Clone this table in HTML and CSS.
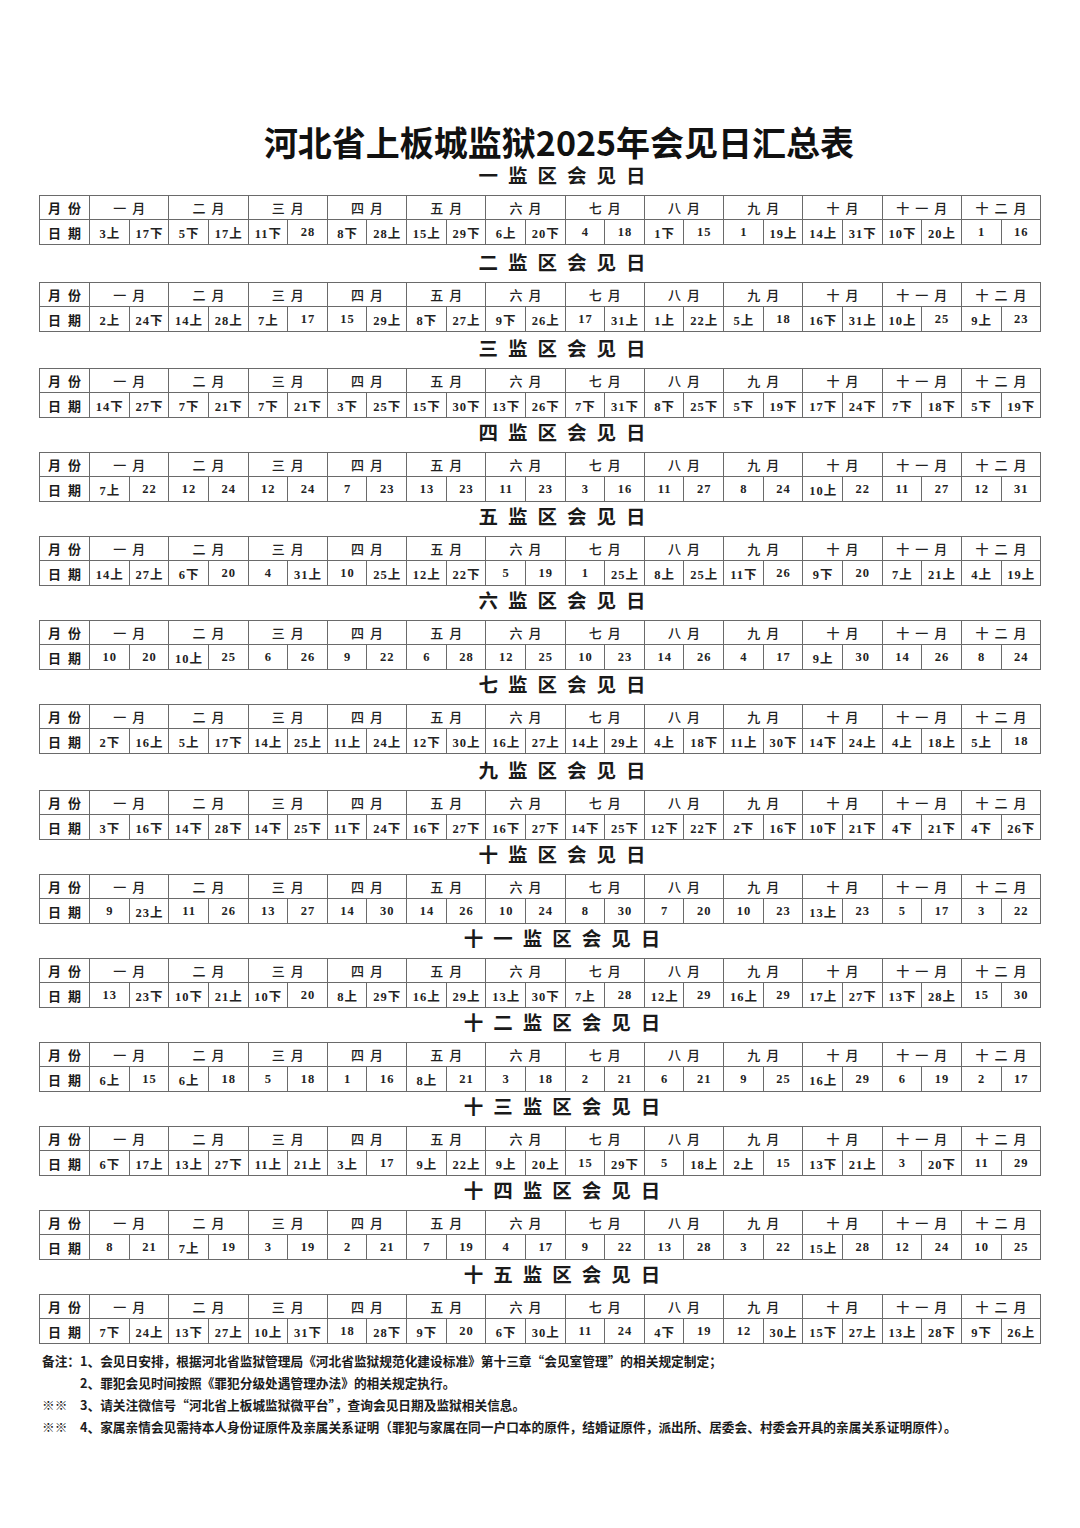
FILE: index.html
```html
<!DOCTYPE html>
<html lang="zh-CN">
<head>
<meta charset="utf-8">
<title>河北省上板城监狱2025年会见日汇总表</title>
<link rel="stylesheet" href="styles.css">
</head>
<body>
<div class="page">
  <h1 class="title">河北省上板城监狱2025年会见日汇总表</h1>

  <section class="sec sec--first">
    <h2 class="sec-title">一监区会见日</h2>
    <table class="grid">
      <colgroup><col class="c-lbl"><col span="24" class="c-day"></colgroup>
      <tr><th class="lbl">月份</th><th colspan="2" class="mon">一月</th><th colspan="2" class="mon">二月</th><th colspan="2" class="mon">三月</th><th colspan="2" class="mon">四月</th><th colspan="2" class="mon">五月</th><th colspan="2" class="mon">六月</th><th colspan="2" class="mon">七月</th><th colspan="2" class="mon">八月</th><th colspan="2" class="mon">九月</th><th colspan="2" class="mon">十月</th><th colspan="2" class="mon">十一月</th><th colspan="2" class="mon">十二月</th></tr>
      <tr><th class="lbl">日期</th><td>3上</td><td>17下</td><td>5下</td><td>17上</td><td>11下</td><td>28</td><td>8下</td><td>28上</td><td>15上</td><td>29下</td><td>6上</td><td>20下</td><td>4</td><td>18</td><td>1下</td><td>15</td><td>1</td><td>19上</td><td>14上</td><td>31下</td><td>10下</td><td>20上</td><td>1</td><td>16</td></tr>
    </table>
  </section>

  <section class="sec sec--gap3">
    <h2 class="sec-title">二监区会见日</h2>
    <table class="grid">
      <colgroup><col class="c-lbl"><col span="24" class="c-day"></colgroup>
      <tr><th class="lbl">月份</th><th colspan="2" class="mon">一月</th><th colspan="2" class="mon">二月</th><th colspan="2" class="mon">三月</th><th colspan="2" class="mon">四月</th><th colspan="2" class="mon">五月</th><th colspan="2" class="mon">六月</th><th colspan="2" class="mon">七月</th><th colspan="2" class="mon">八月</th><th colspan="2" class="mon">九月</th><th colspan="2" class="mon">十月</th><th colspan="2" class="mon">十一月</th><th colspan="2" class="mon">十二月</th></tr>
      <tr><th class="lbl">日期</th><td>2上</td><td>24下</td><td>14上</td><td>28上</td><td>7上</td><td>17</td><td>15</td><td>29上</td><td>8下</td><td>27上</td><td>9下</td><td>26上</td><td>17</td><td>31上</td><td>1上</td><td>22上</td><td>5上</td><td>18</td><td>16下</td><td>31上</td><td>10上</td><td>25</td><td>9上</td><td>23</td></tr>
    </table>
  </section>

  <section class="sec sec--gap2">
    <h2 class="sec-title">三监区会见日</h2>
    <table class="grid">
      <colgroup><col class="c-lbl"><col span="24" class="c-day"></colgroup>
      <tr><th class="lbl">月份</th><th colspan="2" class="mon">一月</th><th colspan="2" class="mon">二月</th><th colspan="2" class="mon">三月</th><th colspan="2" class="mon">四月</th><th colspan="2" class="mon">五月</th><th colspan="2" class="mon">六月</th><th colspan="2" class="mon">七月</th><th colspan="2" class="mon">八月</th><th colspan="2" class="mon">九月</th><th colspan="2" class="mon">十月</th><th colspan="2" class="mon">十一月</th><th colspan="2" class="mon">十二月</th></tr>
      <tr><th class="lbl">日期</th><td>14下</td><td>27下</td><td>7下</td><td>21下</td><td>7下</td><td>21下</td><td>3下</td><td>25下</td><td>15下</td><td>30下</td><td>13下</td><td>26下</td><td>7下</td><td>31下</td><td>8下</td><td>25下</td><td>5下</td><td>19下</td><td>17下</td><td>24下</td><td>7下</td><td>18下</td><td>5下</td><td>19下</td></tr>
    </table>
  </section>

  <section class="sec">
    <h2 class="sec-title">四监区会见日</h2>
    <table class="grid">
      <colgroup><col class="c-lbl"><col span="24" class="c-day"></colgroup>
      <tr><th class="lbl">月份</th><th colspan="2" class="mon">一月</th><th colspan="2" class="mon">二月</th><th colspan="2" class="mon">三月</th><th colspan="2" class="mon">四月</th><th colspan="2" class="mon">五月</th><th colspan="2" class="mon">六月</th><th colspan="2" class="mon">七月</th><th colspan="2" class="mon">八月</th><th colspan="2" class="mon">九月</th><th colspan="2" class="mon">十月</th><th colspan="2" class="mon">十一月</th><th colspan="2" class="mon">十二月</th></tr>
      <tr><th class="lbl">日期</th><td>7上</td><td>22</td><td>12</td><td>24</td><td>12</td><td>24</td><td>7</td><td>23</td><td>13</td><td>23</td><td>11</td><td>23</td><td>3</td><td>16</td><td>11</td><td>27</td><td>8</td><td>24</td><td>10上</td><td>22</td><td>11</td><td>27</td><td>12</td><td>31</td></tr>
    </table>
  </section>

  <section class="sec">
    <h2 class="sec-title">五监区会见日</h2>
    <table class="grid">
      <colgroup><col class="c-lbl"><col span="24" class="c-day"></colgroup>
      <tr><th class="lbl">月份</th><th colspan="2" class="mon">一月</th><th colspan="2" class="mon">二月</th><th colspan="2" class="mon">三月</th><th colspan="2" class="mon">四月</th><th colspan="2" class="mon">五月</th><th colspan="2" class="mon">六月</th><th colspan="2" class="mon">七月</th><th colspan="2" class="mon">八月</th><th colspan="2" class="mon">九月</th><th colspan="2" class="mon">十月</th><th colspan="2" class="mon">十一月</th><th colspan="2" class="mon">十二月</th></tr>
      <tr><th class="lbl">日期</th><td>14上</td><td>27上</td><td>6下</td><td>20</td><td>4</td><td>31上</td><td>10</td><td>25上</td><td>12上</td><td>22下</td><td>5</td><td>19</td><td>1</td><td>25上</td><td>8上</td><td>25上</td><td>11下</td><td>26</td><td>9下</td><td>20</td><td>7上</td><td>21上</td><td>4上</td><td>19上</td></tr>
    </table>
  </section>

  <section class="sec">
    <h2 class="sec-title">六监区会见日</h2>
    <table class="grid">
      <colgroup><col class="c-lbl"><col span="24" class="c-day"></colgroup>
      <tr><th class="lbl">月份</th><th colspan="2" class="mon">一月</th><th colspan="2" class="mon">二月</th><th colspan="2" class="mon">三月</th><th colspan="2" class="mon">四月</th><th colspan="2" class="mon">五月</th><th colspan="2" class="mon">六月</th><th colspan="2" class="mon">七月</th><th colspan="2" class="mon">八月</th><th colspan="2" class="mon">九月</th><th colspan="2" class="mon">十月</th><th colspan="2" class="mon">十一月</th><th colspan="2" class="mon">十二月</th></tr>
      <tr><th class="lbl">日期</th><td>10</td><td>20</td><td>10上</td><td>25</td><td>6</td><td>26</td><td>9</td><td>22</td><td>6</td><td>28</td><td>12</td><td>25</td><td>10</td><td>23</td><td>14</td><td>26</td><td>4</td><td>17</td><td>9上</td><td>30</td><td>14</td><td>26</td><td>8</td><td>24</td></tr>
    </table>
  </section>

  <section class="sec">
    <h2 class="sec-title">七监区会见日</h2>
    <table class="grid">
      <colgroup><col class="c-lbl"><col span="24" class="c-day"></colgroup>
      <tr><th class="lbl">月份</th><th colspan="2" class="mon">一月</th><th colspan="2" class="mon">二月</th><th colspan="2" class="mon">三月</th><th colspan="2" class="mon">四月</th><th colspan="2" class="mon">五月</th><th colspan="2" class="mon">六月</th><th colspan="2" class="mon">七月</th><th colspan="2" class="mon">八月</th><th colspan="2" class="mon">九月</th><th colspan="2" class="mon">十月</th><th colspan="2" class="mon">十一月</th><th colspan="2" class="mon">十二月</th></tr>
      <tr><th class="lbl">日期</th><td>2下</td><td>16上</td><td>5上</td><td>17下</td><td>14上</td><td>25上</td><td>11上</td><td>24上</td><td>12下</td><td>30上</td><td>16上</td><td>27上</td><td>14上</td><td>29上</td><td>4上</td><td>18下</td><td>11上</td><td>30下</td><td>14下</td><td>24上</td><td>4上</td><td>18上</td><td>5上</td><td>18</td></tr>
    </table>
  </section>

  <section class="sec sec--gap2">
    <h2 class="sec-title">九监区会见日</h2>
    <table class="grid">
      <colgroup><col class="c-lbl"><col span="24" class="c-day"></colgroup>
      <tr><th class="lbl">月份</th><th colspan="2" class="mon">一月</th><th colspan="2" class="mon">二月</th><th colspan="2" class="mon">三月</th><th colspan="2" class="mon">四月</th><th colspan="2" class="mon">五月</th><th colspan="2" class="mon">六月</th><th colspan="2" class="mon">七月</th><th colspan="2" class="mon">八月</th><th colspan="2" class="mon">九月</th><th colspan="2" class="mon">十月</th><th colspan="2" class="mon">十一月</th><th colspan="2" class="mon">十二月</th></tr>
      <tr><th class="lbl">日期</th><td>3下</td><td>16下</td><td>14下</td><td>28下</td><td>14下</td><td>25下</td><td>11下</td><td>24下</td><td>16下</td><td>27下</td><td>16下</td><td>27下</td><td>14下</td><td>25下</td><td>12下</td><td>22下</td><td>2下</td><td>16下</td><td>10下</td><td>21下</td><td>4下</td><td>21下</td><td>4下</td><td>26下</td></tr>
    </table>
  </section>

  <section class="sec">
    <h2 class="sec-title">十监区会见日</h2>
    <table class="grid">
      <colgroup><col class="c-lbl"><col span="24" class="c-day"></colgroup>
      <tr><th class="lbl">月份</th><th colspan="2" class="mon">一月</th><th colspan="2" class="mon">二月</th><th colspan="2" class="mon">三月</th><th colspan="2" class="mon">四月</th><th colspan="2" class="mon">五月</th><th colspan="2" class="mon">六月</th><th colspan="2" class="mon">七月</th><th colspan="2" class="mon">八月</th><th colspan="2" class="mon">九月</th><th colspan="2" class="mon">十月</th><th colspan="2" class="mon">十一月</th><th colspan="2" class="mon">十二月</th></tr>
      <tr><th class="lbl">日期</th><td>9</td><td>23上</td><td>11</td><td>26</td><td>13</td><td>27</td><td>14</td><td>30</td><td>14</td><td>26</td><td>10</td><td>24</td><td>8</td><td>30</td><td>7</td><td>20</td><td>10</td><td>23</td><td>13上</td><td>23</td><td>5</td><td>17</td><td>3</td><td>22</td></tr>
    </table>
  </section>

  <section class="sec">
    <h2 class="sec-title">十一监区会见日</h2>
    <table class="grid">
      <colgroup><col class="c-lbl"><col span="24" class="c-day"></colgroup>
      <tr><th class="lbl">月份</th><th colspan="2" class="mon">一月</th><th colspan="2" class="mon">二月</th><th colspan="2" class="mon">三月</th><th colspan="2" class="mon">四月</th><th colspan="2" class="mon">五月</th><th colspan="2" class="mon">六月</th><th colspan="2" class="mon">七月</th><th colspan="2" class="mon">八月</th><th colspan="2" class="mon">九月</th><th colspan="2" class="mon">十月</th><th colspan="2" class="mon">十一月</th><th colspan="2" class="mon">十二月</th></tr>
      <tr><th class="lbl">日期</th><td>13</td><td>23下</td><td>10下</td><td>21上</td><td>10下</td><td>20</td><td>8上</td><td>29下</td><td>16上</td><td>29上</td><td>13上</td><td>30下</td><td>7上</td><td>28</td><td>12上</td><td>29</td><td>16上</td><td>29</td><td>17上</td><td>27下</td><td>13下</td><td>28上</td><td>15</td><td>30</td></tr>
    </table>
  </section>

  <section class="sec">
    <h2 class="sec-title">十二监区会见日</h2>
    <table class="grid">
      <colgroup><col class="c-lbl"><col span="24" class="c-day"></colgroup>
      <tr><th class="lbl">月份</th><th colspan="2" class="mon">一月</th><th colspan="2" class="mon">二月</th><th colspan="2" class="mon">三月</th><th colspan="2" class="mon">四月</th><th colspan="2" class="mon">五月</th><th colspan="2" class="mon">六月</th><th colspan="2" class="mon">七月</th><th colspan="2" class="mon">八月</th><th colspan="2" class="mon">九月</th><th colspan="2" class="mon">十月</th><th colspan="2" class="mon">十一月</th><th colspan="2" class="mon">十二月</th></tr>
      <tr><th class="lbl">日期</th><td>6上</td><td>15</td><td>6上</td><td>18</td><td>5</td><td>18</td><td>1</td><td>16</td><td>8上</td><td>21</td><td>3</td><td>18</td><td>2</td><td>21</td><td>6</td><td>21</td><td>9</td><td>25</td><td>16上</td><td>29</td><td>6</td><td>19</td><td>2</td><td>17</td></tr>
    </table>
  </section>

  <section class="sec">
    <h2 class="sec-title">十三监区会见日</h2>
    <table class="grid">
      <colgroup><col class="c-lbl"><col span="24" class="c-day"></colgroup>
      <tr><th class="lbl">月份</th><th colspan="2" class="mon">一月</th><th colspan="2" class="mon">二月</th><th colspan="2" class="mon">三月</th><th colspan="2" class="mon">四月</th><th colspan="2" class="mon">五月</th><th colspan="2" class="mon">六月</th><th colspan="2" class="mon">七月</th><th colspan="2" class="mon">八月</th><th colspan="2" class="mon">九月</th><th colspan="2" class="mon">十月</th><th colspan="2" class="mon">十一月</th><th colspan="2" class="mon">十二月</th></tr>
      <tr><th class="lbl">日期</th><td>6下</td><td>17上</td><td>13上</td><td>27下</td><td>11上</td><td>21上</td><td>3上</td><td>17</td><td>9上</td><td>22上</td><td>9上</td><td>20上</td><td>15</td><td>29下</td><td>5</td><td>18上</td><td>2上</td><td>15</td><td>13下</td><td>21上</td><td>3</td><td>20下</td><td>11</td><td>29</td></tr>
    </table>
  </section>

  <section class="sec">
    <h2 class="sec-title">十四监区会见日</h2>
    <table class="grid">
      <colgroup><col class="c-lbl"><col span="24" class="c-day"></colgroup>
      <tr><th class="lbl">月份</th><th colspan="2" class="mon">一月</th><th colspan="2" class="mon">二月</th><th colspan="2" class="mon">三月</th><th colspan="2" class="mon">四月</th><th colspan="2" class="mon">五月</th><th colspan="2" class="mon">六月</th><th colspan="2" class="mon">七月</th><th colspan="2" class="mon">八月</th><th colspan="2" class="mon">九月</th><th colspan="2" class="mon">十月</th><th colspan="2" class="mon">十一月</th><th colspan="2" class="mon">十二月</th></tr>
      <tr><th class="lbl">日期</th><td>8</td><td>21</td><td>7上</td><td>19</td><td>3</td><td>19</td><td>2</td><td>21</td><td>7</td><td>19</td><td>4</td><td>17</td><td>9</td><td>22</td><td>13</td><td>28</td><td>3</td><td>22</td><td>15上</td><td>28</td><td>12</td><td>24</td><td>10</td><td>25</td></tr>
    </table>
  </section>

  <section class="sec">
    <h2 class="sec-title">十五监区会见日</h2>
    <table class="grid">
      <colgroup><col class="c-lbl"><col span="24" class="c-day"></colgroup>
      <tr><th class="lbl">月份</th><th colspan="2" class="mon">一月</th><th colspan="2" class="mon">二月</th><th colspan="2" class="mon">三月</th><th colspan="2" class="mon">四月</th><th colspan="2" class="mon">五月</th><th colspan="2" class="mon">六月</th><th colspan="2" class="mon">七月</th><th colspan="2" class="mon">八月</th><th colspan="2" class="mon">九月</th><th colspan="2" class="mon">十月</th><th colspan="2" class="mon">十一月</th><th colspan="2" class="mon">十二月</th></tr>
      <tr><th class="lbl">日期</th><td>7下</td><td>24上</td><td>13下</td><td>27上</td><td>10上</td><td>31下</td><td>18</td><td>28下</td><td>9下</td><td>20</td><td>6下</td><td>30上</td><td>11</td><td>24</td><td>4下</td><td>19</td><td>12</td><td>30上</td><td>15下</td><td>27上</td><td>13上</td><td>28下</td><td>9下</td><td>26上</td></tr>
    </table>
  </section>

  <div class="notes">
    <div class="note"><span class="note-mark">备注：</span><span class="note-text">1、会见日安排，根据河北省监狱管理局《河北省监狱规范化建设标准》第十三章“会见室管理”的相关规定制定；</span></div>
    <div class="note"><span class="note-mark"></span><span class="note-text">2、罪犯会见时间按照《罪犯分级处遇管理办法》的相关规定执行。</span></div>
    <div class="note"><span class="note-mark">※※</span><span class="note-text">3、请关注微信号“河北省上板城监狱微平台”，查询会见日期及监狱相关信息。</span></div>
    <div class="note"><span class="note-mark">※※</span><span class="note-text">4、家属亲情会见需持本人身份证原件及亲属关系证明（罪犯与家属在同一户口本的原件，结婚证原件，派出所、居委会、村委会开具的亲属关系证明原件）。</span></div>
  </div>
</div>
</body>
</html>
```

FILE: styles.css
```css
html, body {
  margin: 0;
  padding: 0;
  background: #ffffff;
}

body {
  color: #1c1c1c;
  font-family: "Noto Sans CJK SC", "Noto Sans", sans-serif;
}

.page {
  width: 1080px;
  padding-top: 124px;
}

.title {
  margin: 0;
  padding-left: 38px;
  text-align: center;
  font-size: 34px;
  line-height: 36px;
  font-weight: 700;
  color: #111;
}

.sec {
  display: flex;
  flex-direction: column;
  justify-content: flex-end;
  height: 84px;
}

.sec--first {
  height: auto;
  padding-top: 3px;
}

.sec--gap3 {
  height: 87px;
}

.sec--gap2 {
  height: 86px;
}

.sec-title {
  margin: 0;
  padding: 0 0 7.5px 54px;
  text-align: center;
  font-size: 19.5px;
  line-height: 24px;
  letter-spacing: 10px;
  font-weight: 700;
  color: #1a1a1a;
}

.grid {
  flex: none;
  margin-left: 39px;
  width: 1001px;
  border-collapse: collapse;
  table-layout: fixed;
}

.c-lbl {
  width: 50px;
}

.c-day {
  width: 39.625px;
}

.grid tr {
  height: 24.7px;
}

.grid th,
.grid td {
  border: 1px solid #6a6a6a;
  padding: 0;
  text-align: center;
  vertical-align: middle;
  white-space: nowrap;
  overflow: hidden;
}

.lbl {
  padding-left: 7px !important;
  font-size: 13px;
  letter-spacing: 7px;
  font-weight: 700;
  color: #1a1a1a;
}

.mon {
  padding-left: 6px !important;
  font-size: 13px;
  letter-spacing: 6px;
  font-weight: 500;
  color: #222;
}

.grid td {
  padding-left: 1px;
  font-family: "Liberation Serif", "Noto Sans CJK SC", serif;
  font-size: 12.5px;
  letter-spacing: 1px;
  font-weight: 700;
  color: #222;
}

.notes {
  margin: 6px 0 0 42px;
  font-size: 12.7px;
  line-height: 22.2px;
  font-weight: 700;
  color: #1c1c1c;
}

.note {
  display: flex;
  white-space: nowrap;
}

.note-mark {
  flex: none;
  width: 38px;
}
```
